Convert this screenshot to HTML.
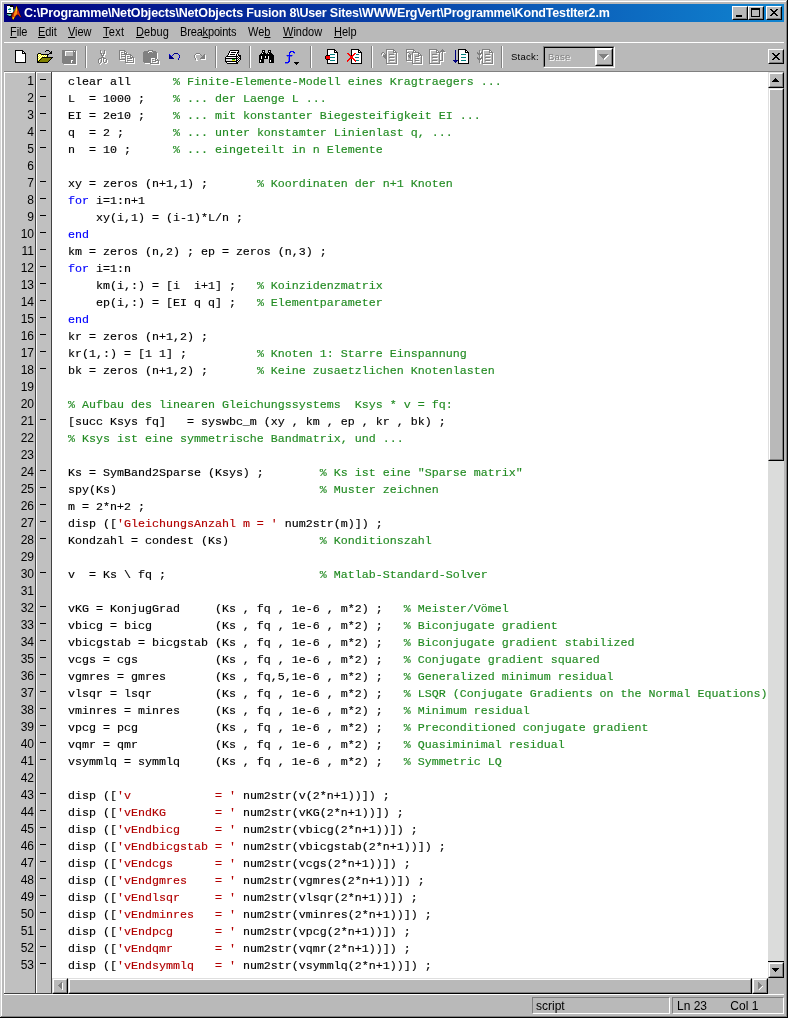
<!DOCTYPE html>
<html><head><meta charset="utf-8"><title>KondTestIter2.m</title>
<style>
html,body{margin:0;padding:0;}
body{width:788px;height:1019px;overflow:hidden;background:#b9b9b9;position:relative;font-family:"Liberation Sans",sans-serif;}
.abs{position:absolute;}
#frame div{position:absolute;}
#title{position:absolute;left:4px;top:4px;width:780px;height:18px;background:linear-gradient(to right,#000080 0%,#1084d0 100%);}
#ttext{position:absolute;left:20px;top:2px;height:14px;line-height:14px;font-size:12.5px;font-weight:bold;color:#fff;white-space:pre;letter-spacing:-0.18px;}
.cb{position:absolute;top:2px;width:16px;height:14px;box-sizing:border-box;background:#b9b9b9;border:1px solid;border-color:#fff #000 #000 #fff;}
.cb:after{content:"";position:absolute;left:0;top:0;right:0;bottom:0;border:1px solid;border-color:#b9b9b9 #808080 #808080 #b9b9b9;}
.mi{position:absolute;top:26px;font-size:12px;line-height:13px;color:#000;white-space:pre;transform:scaleX(0.917);transform-origin:0 0;}
.mi u{text-decoration:underline;text-underline-offset:1px;text-decoration-thickness:1px;}
#ed{position:absolute;left:4px;top:71px;width:780px;height:923px;}
.ln{position:absolute;left:68px;height:17px;line-height:17px;font-family:"Liberation Mono",monospace;font-size:11.667px;white-space:pre;color:#000;-webkit-text-stroke:0.15px;}
.k{color:#0000ff;} .c{color:#228b22;} .s{color:#b20000;}
.no{position:absolute;left:5px;width:29px;text-align:right;height:17px;line-height:17px;font-size:12px;color:#000;}
.da{position:absolute;left:40px;width:6px;height:1px;background:#000;}
.st{position:absolute;top:997px;height:17px;box-sizing:border-box;border:1px solid;border-color:#808080 #fff #fff #808080;font-size:12px;line-height:17px;color:#000;white-space:pre;}
</style></head><body><div id="all" style="position:absolute;left:0;top:0;width:788px;height:1019px;will-change:transform">
<!-- window frame -->
<div class="abs" style="left:0;top:0;width:788px;height:1018px;background:#000"></div>
<div class="abs" style="left:0;top:0;width:787px;height:1017px;background:#d4d4d4"></div>
<div class="abs" style="left:1px;top:1px;width:786px;height:1016px;background:#808080"></div>
<div class="abs" style="left:1px;top:1px;width:785px;height:1015px;background:#fff"></div>
<div class="abs" style="left:2px;top:2px;width:784px;height:1014px;background:#b9b9b9"></div>
<div class="abs" style="left:0;top:1018px;width:788px;height:1px;background:#fff"></div>
<!-- title bar -->
<div id="title">
<svg class="abs" style="left:2px;top:1px" width="17" height="16" viewBox="0 0 17 16">
<g shape-rendering="crispEdges">
<rect x="1" y="0" width="6" height="1" fill="#000"/><rect x="4" y="1" width="3" height="1" fill="#000"/><rect x="7" y="1" width="1" height="7" fill="#101010"/>
<rect x="1" y="1" width="3" height="1" fill="#fff"/><rect x="1" y="2" width="6" height="6" fill="#fff"/>
<rect x="1" y="8" width="7" height="1" fill="#000"/>
<rect x="3" y="3" width="2" height="1" fill="#50c8c0"/><rect x="2" y="4" width="3" height="1" fill="#008888"/><rect x="3" y="6" width="2" height="1" fill="#50c8c0"/>
</g>
<polygon points="0,9 6,9 7,7 9,5 8,10 5.5,12 3,11.5" fill="#000"/>
<polygon points="0.3,9 5.5,9 4.8,10.8 3.2,11 " fill="#62cfc4"/>
<polygon points="7.2,5 8.6,3.4 8.2,6.5 7,8.5" fill="#38b0b0"/>
<polygon points="10.5,0.3 11.8,2 13,5.5 14.3,9.5 16,13.2 13.6,11.6 12,10 11,10.6 9,12.8 7.6,15.2 6.3,14.6 5,10.8 6.4,8.6 8,6 9.3,3" fill="#200808"/>
<polygon points="10.3,1 11.2,3 12.2,6.5 13.5,10 15.2,12.6 13.4,11 12,9.4 10.6,10 8.8,12.2 7.4,14.6 6.6,14 5.6,10.8 7,8.6 8.4,6 9.5,3.2" fill="#c8300c"/>
<polygon points="9.4,5 10.2,3.4 10.9,6 11.3,9 10.2,9.4 8.6,11.6 7.8,11.8 8,9" fill="#ff9010"/>
<polygon points="11.2,2.6 12.6,6 14,10 15.4,12.8 13.4,11 12.2,9 11.5,6" fill="#d8301c"/>
<polygon points="9.6,2.4 8.6,4 8.2,6.4 9.2,4.6" fill="#30a0a0"/>
<polygon points="10.2,1.6 10.9,1.8 11.1,5.5 10.5,6.6 9.9,5" fill="#ffee00"/>
<polygon points="6.4,12.4 8.4,12 7.4,14.4 6.8,14.2" fill="#ffee00"/>
<polygon points="5.8,9.6 7.2,7.4 7.2,9.6 6.4,11.4" fill="#8c1408"/>
</svg>
<div id="ttext">C:\Programme\NetObjects\NetObjects Fusion 8\User Sites\WWWErgVert\Programme\KondTestIter2.m</div>
<div class="cb" style="left:728px"><svg class="abs" style="left:0;top:0" width="14" height="12" shape-rendering="crispEdges"><rect x="3" y="8" width="6" height="2" fill="#000"/></svg></div>
<div class="cb" style="left:744px"><svg class="abs" style="left:0;top:0" width="14" height="12" shape-rendering="crispEdges"><rect x="2" y="1" width="9" height="9" fill="#000"/><rect x="3" y="3" width="7" height="6" fill="#b9b9b9"/></svg></div>
<div class="cb" style="left:762px"><svg class="abs" style="left:0;top:0" width="14" height="12" shape-rendering="crispEdges"><rect x="3" y="2" width="2" height="1" fill="#000"/><rect x="9" y="2" width="2" height="1" fill="#000"/><rect x="4" y="3" width="2" height="1" fill="#000"/><rect x="8" y="3" width="2" height="1" fill="#000"/><rect x="5" y="4" width="4" height="1" fill="#000"/><rect x="6" y="5" width="2" height="1" fill="#000"/><rect x="5" y="6" width="4" height="1" fill="#000"/><rect x="4" y="7" width="2" height="1" fill="#000"/><rect x="8" y="7" width="2" height="1" fill="#000"/><rect x="3" y="8" width="2" height="1" fill="#000"/><rect x="9" y="8" width="2" height="1" fill="#000"/></svg></div>
</div>
<!-- menu -->
<span class="mi" style="left:10px;letter-spacing:-0.10px"><u>F</u>ile</span><span class="mi" style="left:38px;letter-spacing:-0.10px"><u>E</u>dit</span><span class="mi" style="left:68px;letter-spacing:-0.10px"><u>V</u>iew</span><span class="mi" style="left:103px;letter-spacing:0.30px"><u>T</u>ext</span><span class="mi" style="left:136px;letter-spacing:0.10px"><u>D</u>ebug</span><span class="mi" style="left:180px;letter-spacing:-0.18px">Brea<u>k</u>points</span><span class="mi" style="left:248px;letter-spacing:0.00px">We<u>b</u></span><span class="mi" style="left:283px;letter-spacing:0.00px"><u>W</u>indow</span><span class="mi" style="left:334px;letter-spacing:0.00px"><u>H</u>elp</span>
<div class="abs" style="left:4px;top:42px;width:780px;height:1px;background:#fff"></div>
<!-- toolbar -->
<svg class="abs" style="left:0;top:0" width="788" height="72" shape-rendering="crispEdges"><rect x="15" y="50" width="8" height="1" fill="#000"/><rect x="15" y="51" width="1" height="1" fill="#000"/><rect x="16" y="51" width="6" height="1" fill="#fff"/><rect x="22" y="51" width="2" height="1" fill="#000"/><rect x="15" y="52" width="1" height="1" fill="#000"/><rect x="16" y="52" width="6" height="1" fill="#fff"/><rect x="22" y="52" width="1" height="1" fill="#000"/><rect x="23" y="52" width="1" height="1" fill="#fff"/><rect x="24" y="52" width="1" height="1" fill="#000"/><rect x="15" y="53" width="1" height="1" fill="#000"/><rect x="16" y="53" width="6" height="1" fill="#fff"/><rect x="22" y="53" width="4" height="1" fill="#000"/><rect x="15" y="54" width="1" height="1" fill="#000"/><rect x="16" y="54" width="9" height="1" fill="#fff"/><rect x="25" y="54" width="1" height="1" fill="#000"/><rect x="15" y="55" width="1" height="1" fill="#000"/><rect x="16" y="55" width="9" height="1" fill="#fff"/><rect x="25" y="55" width="1" height="1" fill="#000"/><rect x="15" y="56" width="1" height="1" fill="#000"/><rect x="16" y="56" width="9" height="1" fill="#fff"/><rect x="25" y="56" width="1" height="1" fill="#000"/><rect x="15" y="57" width="1" height="1" fill="#000"/><rect x="16" y="57" width="9" height="1" fill="#fff"/><rect x="25" y="57" width="1" height="1" fill="#000"/><rect x="15" y="58" width="1" height="1" fill="#000"/><rect x="16" y="58" width="9" height="1" fill="#fff"/><rect x="25" y="58" width="1" height="1" fill="#000"/><rect x="15" y="59" width="1" height="1" fill="#000"/><rect x="16" y="59" width="9" height="1" fill="#fff"/><rect x="25" y="59" width="1" height="1" fill="#000"/><rect x="15" y="60" width="1" height="1" fill="#000"/><rect x="16" y="60" width="9" height="1" fill="#fff"/><rect x="25" y="60" width="1" height="1" fill="#000"/><rect x="15" y="61" width="1" height="1" fill="#000"/><rect x="16" y="61" width="9" height="1" fill="#fff"/><rect x="25" y="61" width="1" height="1" fill="#000"/><rect x="15" y="62" width="11" height="1" fill="#000"/><rect x="46" y="50" width="3" height="1" fill="#000"/><rect x="45" y="51" width="1" height="1" fill="#000"/><rect x="49" y="51" width="1" height="1" fill="#000"/><rect x="51" y="51" width="1" height="1" fill="#000"/><rect x="50" y="52" width="2" height="1" fill="#000"/><rect x="38" y="53" width="3" height="1" fill="#000"/><rect x="49" y="53" width="3" height="1" fill="#000"/><rect x="37" y="54" width="1" height="1" fill="#000"/><rect x="38" y="54" width="1" height="1" fill="#ffff00"/><rect x="39" y="54" width="1" height="1" fill="#fff"/><rect x="40" y="54" width="1" height="1" fill="#ffff00"/><rect x="41" y="54" width="8" height="1" fill="#000"/><rect x="37" y="55" width="1" height="1" fill="#000"/><rect x="38" y="55" width="1" height="1" fill="#fff"/><rect x="39" y="55" width="1" height="1" fill="#ffff00"/><rect x="40" y="55" width="1" height="1" fill="#fff"/><rect x="41" y="55" width="1" height="1" fill="#ffff00"/><rect x="42" y="55" width="1" height="1" fill="#fff"/><rect x="43" y="55" width="1" height="1" fill="#ffff00"/><rect x="44" y="55" width="1" height="1" fill="#fff"/><rect x="45" y="55" width="1" height="1" fill="#ffff00"/><rect x="46" y="55" width="1" height="1" fill="#fff"/><rect x="47" y="55" width="1" height="1" fill="#000"/><rect x="37" y="56" width="1" height="1" fill="#000"/><rect x="38" y="56" width="1" height="1" fill="#ffff00"/><rect x="39" y="56" width="1" height="1" fill="#fff"/><rect x="40" y="56" width="1" height="1" fill="#ffff00"/><rect x="41" y="56" width="1" height="1" fill="#fff"/><rect x="42" y="56" width="1" height="1" fill="#ffff00"/><rect x="43" y="56" width="1" height="1" fill="#fff"/><rect x="44" y="56" width="1" height="1" fill="#ffff00"/><rect x="45" y="56" width="1" height="1" fill="#fff"/><rect x="46" y="56" width="1" height="1" fill="#ffff00"/><rect x="47" y="56" width="1" height="1" fill="#000"/><rect x="37" y="57" width="1" height="1" fill="#000"/><rect x="38" y="57" width="1" height="1" fill="#fff"/><rect x="39" y="57" width="1" height="1" fill="#ffff00"/><rect x="40" y="57" width="1" height="1" fill="#fff"/><rect x="41" y="57" width="1" height="1" fill="#ffff00"/><rect x="42" y="57" width="11" height="1" fill="#000"/><rect x="37" y="58" width="1" height="1" fill="#000"/><rect x="38" y="58" width="1" height="1" fill="#ffff00"/><rect x="39" y="58" width="1" height="1" fill="#fff"/><rect x="40" y="58" width="1" height="1" fill="#ffff00"/><rect x="41" y="58" width="1" height="1" fill="#000"/><rect x="42" y="58" width="9" height="1" fill="#808000"/><rect x="51" y="58" width="1" height="1" fill="#000"/><rect x="37" y="59" width="1" height="1" fill="#000"/><rect x="38" y="59" width="1" height="1" fill="#fff"/><rect x="39" y="59" width="1" height="1" fill="#ffff00"/><rect x="40" y="59" width="1" height="1" fill="#000"/><rect x="41" y="59" width="9" height="1" fill="#808000"/><rect x="50" y="59" width="1" height="1" fill="#000"/><rect x="37" y="60" width="1" height="1" fill="#000"/><rect x="38" y="60" width="1" height="1" fill="#ffff00"/><rect x="39" y="60" width="1" height="1" fill="#000"/><rect x="40" y="60" width="9" height="1" fill="#808000"/><rect x="49" y="60" width="1" height="1" fill="#000"/><rect x="37" y="61" width="2" height="1" fill="#000"/><rect x="39" y="61" width="9" height="1" fill="#808000"/><rect x="48" y="61" width="1" height="1" fill="#000"/><rect x="37" y="62" width="11" height="1" fill="#000"/><rect x="62" y="50" width="14" height="1" fill="#808080"/><rect x="62" y="51" width="3" height="1" fill="#808080"/><rect x="65" y="51" width="8" height="1" fill="#fff"/><rect x="73" y="51" width="1" height="1" fill="#808080"/><rect x="74" y="51" width="1" height="1" fill="#fff"/><rect x="75" y="51" width="1" height="1" fill="#808080"/><rect x="76" y="51" width="1" height="1" fill="#fff"/><rect x="62" y="52" width="3" height="1" fill="#808080"/><rect x="65" y="52" width="1" height="1" fill="#fff"/><rect x="66" y="52" width="7" height="1" fill="#b9b9b9"/><rect x="73" y="52" width="3" height="1" fill="#808080"/><rect x="76" y="52" width="1" height="1" fill="#fff"/><rect x="62" y="53" width="3" height="1" fill="#808080"/><rect x="65" y="53" width="1" height="1" fill="#fff"/><rect x="66" y="53" width="7" height="1" fill="#b9b9b9"/><rect x="73" y="53" width="3" height="1" fill="#808080"/><rect x="76" y="53" width="1" height="1" fill="#fff"/><rect x="62" y="54" width="3" height="1" fill="#808080"/><rect x="65" y="54" width="1" height="1" fill="#fff"/><rect x="66" y="54" width="7" height="1" fill="#b9b9b9"/><rect x="73" y="54" width="3" height="1" fill="#808080"/><rect x="76" y="54" width="1" height="1" fill="#fff"/><rect x="62" y="55" width="3" height="1" fill="#808080"/><rect x="65" y="55" width="1" height="1" fill="#fff"/><rect x="66" y="55" width="7" height="1" fill="#b9b9b9"/><rect x="73" y="55" width="3" height="1" fill="#808080"/><rect x="76" y="55" width="1" height="1" fill="#fff"/><rect x="62" y="56" width="14" height="1" fill="#808080"/><rect x="76" y="56" width="1" height="1" fill="#fff"/><rect x="62" y="57" width="14" height="1" fill="#808080"/><rect x="76" y="57" width="1" height="1" fill="#fff"/><rect x="62" y="58" width="14" height="1" fill="#808080"/><rect x="76" y="58" width="1" height="1" fill="#fff"/><rect x="62" y="59" width="14" height="1" fill="#808080"/><rect x="76" y="59" width="1" height="1" fill="#fff"/><rect x="62" y="60" width="9" height="1" fill="#808080"/><rect x="71" y="60" width="2" height="1" fill="#fff"/><rect x="73" y="60" width="3" height="1" fill="#808080"/><rect x="76" y="60" width="1" height="1" fill="#fff"/><rect x="62" y="61" width="9" height="1" fill="#808080"/><rect x="71" y="61" width="1" height="1" fill="#fff"/><rect x="72" y="61" width="4" height="1" fill="#808080"/><rect x="76" y="61" width="1" height="1" fill="#fff"/><rect x="62" y="62" width="9" height="1" fill="#808080"/><rect x="71" y="62" width="1" height="1" fill="#fff"/><rect x="72" y="62" width="4" height="1" fill="#808080"/><rect x="76" y="62" width="1" height="1" fill="#fff"/><rect x="63" y="63" width="13" height="1" fill="#808080"/><rect x="76" y="63" width="1" height="1" fill="#fff"/><rect x="64" y="64" width="13" height="1" fill="#fff"/><rect x="100" y="50" width="1" height="1" fill="#808080"/><rect x="104" y="50" width="1" height="1" fill="#808080"/><rect x="100" y="51" width="1" height="1" fill="#808080"/><rect x="101" y="51" width="1" height="1" fill="#fff"/><rect x="104" y="51" width="1" height="1" fill="#808080"/><rect x="105" y="51" width="1" height="1" fill="#fff"/><rect x="100" y="52" width="1" height="1" fill="#808080"/><rect x="101" y="52" width="1" height="1" fill="#fff"/><rect x="104" y="52" width="1" height="1" fill="#808080"/><rect x="105" y="52" width="1" height="1" fill="#fff"/><rect x="100" y="53" width="2" height="1" fill="#808080"/><rect x="103" y="53" width="2" height="1" fill="#808080"/><rect x="105" y="53" width="1" height="1" fill="#fff"/><rect x="101" y="54" width="1" height="1" fill="#808080"/><rect x="102" y="54" width="1" height="1" fill="#fff"/><rect x="103" y="54" width="1" height="1" fill="#808080"/><rect x="104" y="54" width="2" height="1" fill="#fff"/><rect x="101" y="55" width="3" height="1" fill="#808080"/><rect x="104" y="55" width="1" height="1" fill="#fff"/><rect x="102" y="56" width="1" height="1" fill="#808080"/><rect x="103" y="56" width="2" height="1" fill="#fff"/><rect x="101" y="57" width="3" height="1" fill="#808080"/><rect x="99" y="58" width="3" height="1" fill="#808080"/><rect x="102" y="58" width="1" height="1" fill="#fff"/><rect x="103" y="58" width="3" height="1" fill="#808080"/><rect x="98" y="59" width="1" height="1" fill="#808080"/><rect x="100" y="59" width="1" height="1" fill="#fff"/><rect x="101" y="59" width="1" height="1" fill="#808080"/><rect x="102" y="59" width="1" height="1" fill="#fff"/><rect x="103" y="59" width="1" height="1" fill="#808080"/><rect x="104" y="59" width="2" height="1" fill="#fff"/><rect x="106" y="59" width="1" height="1" fill="#808080"/><rect x="98" y="60" width="1" height="1" fill="#808080"/><rect x="99" y="60" width="1" height="1" fill="#fff"/><rect x="101" y="60" width="1" height="1" fill="#808080"/><rect x="102" y="60" width="1" height="1" fill="#fff"/><rect x="103" y="60" width="1" height="1" fill="#808080"/><rect x="104" y="60" width="1" height="1" fill="#fff"/><rect x="106" y="60" width="1" height="1" fill="#808080"/><rect x="107" y="60" width="1" height="1" fill="#fff"/><rect x="98" y="61" width="1" height="1" fill="#808080"/><rect x="99" y="61" width="1" height="1" fill="#fff"/><rect x="101" y="61" width="1" height="1" fill="#808080"/><rect x="102" y="61" width="1" height="1" fill="#fff"/><rect x="103" y="61" width="1" height="1" fill="#808080"/><rect x="104" y="61" width="1" height="1" fill="#fff"/><rect x="106" y="61" width="1" height="1" fill="#808080"/><rect x="107" y="61" width="1" height="1" fill="#fff"/><rect x="98" y="62" width="1" height="1" fill="#808080"/><rect x="99" y="62" width="1" height="1" fill="#fff"/><rect x="100" y="62" width="1" height="1" fill="#808080"/><rect x="102" y="62" width="1" height="1" fill="#fff"/><rect x="104" y="62" width="2" height="1" fill="#808080"/><rect x="107" y="62" width="1" height="1" fill="#fff"/><rect x="99" y="63" width="1" height="1" fill="#808080"/><rect x="101" y="63" width="1" height="1" fill="#fff"/><rect x="105" y="63" width="2" height="1" fill="#fff"/><rect x="100" y="64" width="1" height="1" fill="#fff"/><rect x="119" y="50" width="6" height="1" fill="#808080"/><rect x="119" y="51" width="1" height="1" fill="#808080"/><rect x="120" y="51" width="4" height="1" fill="#fff"/><rect x="124" y="51" width="2" height="1" fill="#808080"/><rect x="119" y="52" width="1" height="1" fill="#808080"/><rect x="120" y="52" width="1" height="1" fill="#fff"/><rect x="121" y="52" width="2" height="1" fill="#808080"/><rect x="124" y="52" width="1" height="1" fill="#808080"/><rect x="125" y="52" width="1" height="1" fill="#fff"/><rect x="126" y="52" width="1" height="1" fill="#808080"/><rect x="119" y="53" width="1" height="1" fill="#808080"/><rect x="120" y="53" width="1" height="1" fill="#fff"/><rect x="122" y="53" width="2" height="1" fill="#fff"/><rect x="124" y="53" width="3" height="1" fill="#808080"/><rect x="127" y="53" width="1" height="1" fill="#fff"/><rect x="119" y="54" width="1" height="1" fill="#808080"/><rect x="120" y="54" width="1" height="1" fill="#fff"/><rect x="121" y="54" width="10" height="1" fill="#808080"/><rect x="119" y="55" width="1" height="1" fill="#808080"/><rect x="120" y="55" width="1" height="1" fill="#fff"/><rect x="122" y="55" width="3" height="1" fill="#fff"/><rect x="125" y="55" width="1" height="1" fill="#808080"/><rect x="126" y="55" width="4" height="1" fill="#fff"/><rect x="130" y="55" width="2" height="1" fill="#808080"/><rect x="119" y="56" width="1" height="1" fill="#808080"/><rect x="120" y="56" width="1" height="1" fill="#fff"/><rect x="121" y="56" width="5" height="1" fill="#808080"/><rect x="126" y="56" width="1" height="1" fill="#fff"/><rect x="127" y="56" width="2" height="1" fill="#808080"/><rect x="130" y="56" width="1" height="1" fill="#808080"/><rect x="131" y="56" width="1" height="1" fill="#fff"/><rect x="132" y="56" width="1" height="1" fill="#808080"/><rect x="119" y="57" width="1" height="1" fill="#808080"/><rect x="120" y="57" width="1" height="1" fill="#fff"/><rect x="122" y="57" width="3" height="1" fill="#fff"/><rect x="125" y="57" width="1" height="1" fill="#808080"/><rect x="126" y="57" width="1" height="1" fill="#fff"/><rect x="128" y="57" width="2" height="1" fill="#fff"/><rect x="130" y="57" width="4" height="1" fill="#808080"/><rect x="119" y="58" width="1" height="1" fill="#808080"/><rect x="120" y="58" width="1" height="1" fill="#fff"/><rect x="125" y="58" width="1" height="1" fill="#808080"/><rect x="126" y="58" width="1" height="1" fill="#fff"/><rect x="127" y="58" width="5" height="1" fill="#808080"/><rect x="132" y="58" width="1" height="1" fill="#fff"/><rect x="133" y="58" width="1" height="1" fill="#808080"/><rect x="134" y="58" width="1" height="1" fill="#fff"/><rect x="119" y="59" width="7" height="1" fill="#808080"/><rect x="126" y="59" width="1" height="1" fill="#fff"/><rect x="128" y="59" width="5" height="1" fill="#fff"/><rect x="133" y="59" width="1" height="1" fill="#808080"/><rect x="134" y="59" width="1" height="1" fill="#fff"/><rect x="120" y="60" width="5" height="1" fill="#fff"/><rect x="125" y="60" width="1" height="1" fill="#808080"/><rect x="126" y="60" width="1" height="1" fill="#fff"/><rect x="127" y="60" width="5" height="1" fill="#808080"/><rect x="133" y="60" width="1" height="1" fill="#808080"/><rect x="134" y="60" width="1" height="1" fill="#fff"/><rect x="125" y="61" width="1" height="1" fill="#808080"/><rect x="126" y="61" width="1" height="1" fill="#fff"/><rect x="128" y="61" width="5" height="1" fill="#fff"/><rect x="133" y="61" width="1" height="1" fill="#808080"/><rect x="134" y="61" width="1" height="1" fill="#fff"/><rect x="125" y="62" width="9" height="1" fill="#808080"/><rect x="134" y="62" width="1" height="1" fill="#fff"/><rect x="126" y="63" width="9" height="1" fill="#fff"/><rect x="148" y="50" width="5" height="1" fill="#808080"/><rect x="144" y="51" width="5" height="1" fill="#808080"/><rect x="149" y="51" width="3" height="1" fill="#fff"/><rect x="152" y="51" width="4" height="1" fill="#808080"/><rect x="143" y="52" width="5" height="1" fill="#808080"/><rect x="148" y="52" width="1" height="1" fill="#fff"/><rect x="149" y="52" width="3" height="1" fill="#808080"/><rect x="153" y="52" width="4" height="1" fill="#808080"/><rect x="143" y="53" width="14" height="1" fill="#808080"/><rect x="157" y="53" width="1" height="1" fill="#fff"/><rect x="143" y="54" width="14" height="1" fill="#808080"/><rect x="157" y="54" width="1" height="1" fill="#fff"/><rect x="143" y="55" width="14" height="1" fill="#808080"/><rect x="157" y="55" width="1" height="1" fill="#fff"/><rect x="143" y="56" width="14" height="1" fill="#808080"/><rect x="157" y="56" width="1" height="1" fill="#fff"/><rect x="143" y="57" width="14" height="1" fill="#808080"/><rect x="157" y="57" width="1" height="1" fill="#fff"/><rect x="143" y="58" width="8" height="1" fill="#808080"/><rect x="151" y="58" width="4" height="1" fill="#fff"/><rect x="155" y="58" width="2" height="1" fill="#808080"/><rect x="157" y="58" width="1" height="1" fill="#fff"/><rect x="143" y="59" width="8" height="1" fill="#808080"/><rect x="151" y="59" width="1" height="1" fill="#fff"/><rect x="152" y="59" width="2" height="1" fill="#808080"/><rect x="155" y="59" width="1" height="1" fill="#808080"/><rect x="156" y="59" width="1" height="1" fill="#fff"/><rect x="157" y="59" width="1" height="1" fill="#808080"/><rect x="143" y="60" width="8" height="1" fill="#808080"/><rect x="151" y="60" width="1" height="1" fill="#fff"/><rect x="153" y="60" width="2" height="1" fill="#fff"/><rect x="155" y="60" width="4" height="1" fill="#808080"/><rect x="143" y="61" width="8" height="1" fill="#808080"/><rect x="151" y="61" width="1" height="1" fill="#fff"/><rect x="152" y="61" width="4" height="1" fill="#808080"/><rect x="156" y="61" width="2" height="1" fill="#fff"/><rect x="158" y="61" width="1" height="1" fill="#808080"/><rect x="159" y="61" width="1" height="1" fill="#fff"/><rect x="144" y="62" width="7" height="1" fill="#808080"/><rect x="151" y="62" width="1" height="1" fill="#fff"/><rect x="153" y="62" width="4" height="1" fill="#fff"/><rect x="158" y="62" width="1" height="1" fill="#808080"/><rect x="159" y="62" width="1" height="1" fill="#fff"/><rect x="145" y="63" width="5" height="1" fill="#fff"/><rect x="150" y="63" width="9" height="1" fill="#808080"/><rect x="159" y="63" width="1" height="1" fill="#fff"/><rect x="151" y="64" width="9" height="1" fill="#fff"/><rect x="174" y="53" width="4" height="1" fill="#000080"/><rect x="169" y="54" width="1" height="1" fill="#0000ff"/><rect x="173" y="54" width="1" height="1" fill="#000080"/><rect x="178" y="54" width="1" height="1" fill="#0000ff"/><rect x="169" y="55" width="1" height="1" fill="#000080"/><rect x="170" y="55" width="1" height="1" fill="#0000ff"/><rect x="172" y="55" width="1" height="1" fill="#0000ff"/><rect x="179" y="55" width="1" height="1" fill="#000080"/><rect x="169" y="56" width="3" height="1" fill="#000080"/><rect x="179" y="56" width="1" height="1" fill="#0000ff"/><rect x="169" y="57" width="4" height="1" fill="#000080"/><rect x="179" y="57" width="1" height="1" fill="#000080"/><rect x="169" y="58" width="5" height="1" fill="#000080"/><rect x="178" y="58" width="1" height="1" fill="#0000ff"/><rect x="178" y="59" width="1" height="1" fill="#000080"/><rect x="196" y="53" width="4" height="1" fill="#808080"/><rect x="195" y="54" width="1" height="1" fill="#808080"/><rect x="196" y="54" width="4" height="1" fill="#fff"/><rect x="200" y="54" width="1" height="1" fill="#808080"/><rect x="204" y="54" width="1" height="1" fill="#808080"/><rect x="194" y="55" width="1" height="1" fill="#808080"/><rect x="195" y="55" width="1" height="1" fill="#fff"/><rect x="201" y="55" width="1" height="1" fill="#808080"/><rect x="203" y="55" width="2" height="1" fill="#808080"/><rect x="205" y="55" width="1" height="1" fill="#fff"/><rect x="194" y="56" width="1" height="1" fill="#808080"/><rect x="195" y="56" width="1" height="1" fill="#fff"/><rect x="202" y="56" width="3" height="1" fill="#808080"/><rect x="205" y="56" width="1" height="1" fill="#fff"/><rect x="194" y="57" width="1" height="1" fill="#808080"/><rect x="195" y="57" width="1" height="1" fill="#fff"/><rect x="201" y="57" width="4" height="1" fill="#808080"/><rect x="205" y="57" width="1" height="1" fill="#fff"/><rect x="195" y="58" width="1" height="1" fill="#808080"/><rect x="196" y="58" width="1" height="1" fill="#fff"/><rect x="200" y="58" width="5" height="1" fill="#808080"/><rect x="205" y="58" width="1" height="1" fill="#fff"/><rect x="195" y="59" width="1" height="1" fill="#808080"/><rect x="196" y="59" width="1" height="1" fill="#fff"/><rect x="201" y="59" width="5" height="1" fill="#fff"/><rect x="196" y="60" width="2" height="1" fill="#fff"/><rect x="230" y="50" width="9" height="1" fill="#000"/><rect x="229" y="51" width="1" height="1" fill="#000"/><rect x="230" y="51" width="8" height="1" fill="#fff"/><rect x="238" y="51" width="1" height="1" fill="#000"/><rect x="229" y="52" width="1" height="1" fill="#000"/><rect x="230" y="52" width="1" height="1" fill="#fff"/><rect x="231" y="52" width="5" height="1" fill="#000"/><rect x="236" y="52" width="1" height="1" fill="#fff"/><rect x="237" y="52" width="2" height="1" fill="#000"/><rect x="228" y="53" width="1" height="1" fill="#000"/><rect x="229" y="53" width="8" height="1" fill="#fff"/><rect x="237" y="53" width="1" height="1" fill="#000"/><rect x="228" y="54" width="1" height="1" fill="#000"/><rect x="229" y="54" width="1" height="1" fill="#fff"/><rect x="230" y="54" width="5" height="1" fill="#000"/><rect x="235" y="54" width="1" height="1" fill="#fff"/><rect x="236" y="54" width="1" height="1" fill="#000"/><rect x="237" y="54" width="1" height="1" fill="#fff"/><rect x="238" y="54" width="1" height="1" fill="#000"/><rect x="227" y="55" width="1" height="1" fill="#000"/><rect x="228" y="55" width="8" height="1" fill="#fff"/><rect x="236" y="55" width="1" height="1" fill="#000"/><rect x="237" y="55" width="1" height="1" fill="#fff"/><rect x="238" y="55" width="3" height="1" fill="#000"/><rect x="226" y="56" width="12" height="1" fill="#000"/><rect x="238" y="56" width="1" height="1" fill="#fff"/><rect x="239" y="56" width="2" height="1" fill="#000"/><rect x="225" y="57" width="1" height="1" fill="#000"/><rect x="226" y="57" width="10" height="1" fill="#fff"/><rect x="236" y="57" width="1" height="1" fill="#000"/><rect x="237" y="57" width="1" height="1" fill="#fff"/><rect x="238" y="57" width="1" height="1" fill="#000"/><rect x="239" y="57" width="1" height="1" fill="#fff"/><rect x="240" y="57" width="1" height="1" fill="#000"/><rect x="225" y="58" width="13" height="1" fill="#000"/><rect x="238" y="58" width="1" height="1" fill="#fff"/><rect x="239" y="58" width="2" height="1" fill="#000"/><rect x="225" y="59" width="1" height="1" fill="#000"/><rect x="226" y="59" width="6" height="1" fill="#e0e0e0"/><rect x="232" y="59" width="3" height="1" fill="#00a000"/><rect x="235" y="59" width="1" height="1" fill="#e0e0e0"/><rect x="236" y="59" width="1" height="1" fill="#000"/><rect x="237" y="59" width="1" height="1" fill="#fff"/><rect x="238" y="59" width="1" height="1" fill="#000"/><rect x="239" y="59" width="1" height="1" fill="#fff"/><rect x="240" y="59" width="1" height="1" fill="#000"/><rect x="225" y="60" width="1" height="1" fill="#000"/><rect x="226" y="60" width="6" height="1" fill="#e0e0e0"/><rect x="232" y="60" width="3" height="1" fill="#e8e800"/><rect x="235" y="60" width="1" height="1" fill="#e0e0e0"/><rect x="236" y="60" width="2" height="1" fill="#000"/><rect x="238" y="60" width="1" height="1" fill="#fff"/><rect x="239" y="60" width="1" height="1" fill="#000"/><rect x="225" y="61" width="12" height="1" fill="#000"/><rect x="237" y="61" width="1" height="1" fill="#fff"/><rect x="238" y="61" width="1" height="1" fill="#000"/><rect x="226" y="62" width="1" height="1" fill="#000"/><rect x="227" y="62" width="9" height="1" fill="#fff"/><rect x="236" y="62" width="2" height="1" fill="#000"/><rect x="227" y="63" width="11" height="1" fill="#000"/><rect x="262" y="50" width="3" height="1" fill="#000"/><rect x="268" y="50" width="3" height="1" fill="#000"/><rect x="262" y="51" width="1" height="1" fill="#000"/><rect x="263" y="51" width="1" height="1" fill="#fff"/><rect x="264" y="51" width="1" height="1" fill="#000"/><rect x="268" y="51" width="1" height="1" fill="#000"/><rect x="269" y="51" width="1" height="1" fill="#fff"/><rect x="270" y="51" width="1" height="1" fill="#000"/><rect x="262" y="52" width="3" height="1" fill="#000"/><rect x="268" y="52" width="3" height="1" fill="#000"/><rect x="261" y="53" width="1" height="1" fill="#000"/><rect x="262" y="53" width="1" height="1" fill="#fff"/><rect x="263" y="53" width="3" height="1" fill="#000"/><rect x="267" y="53" width="1" height="1" fill="#000"/><rect x="268" y="53" width="1" height="1" fill="#fff"/><rect x="269" y="53" width="3" height="1" fill="#000"/><rect x="260" y="54" width="13" height="1" fill="#000"/><rect x="259" y="55" width="15" height="1" fill="#000"/><rect x="259" y="56" width="2" height="1" fill="#000"/><rect x="261" y="56" width="1" height="1" fill="#fff"/><rect x="262" y="56" width="3" height="1" fill="#000"/><rect x="265" y="56" width="1" height="1" fill="#fff"/><rect x="266" y="56" width="2" height="1" fill="#000"/><rect x="268" y="56" width="1" height="1" fill="#fff"/><rect x="269" y="56" width="5" height="1" fill="#000"/><rect x="259" y="57" width="2" height="1" fill="#000"/><rect x="261" y="57" width="1" height="1" fill="#fff"/><rect x="262" y="57" width="3" height="1" fill="#000"/><rect x="265" y="57" width="1" height="1" fill="#fff"/><rect x="266" y="57" width="2" height="1" fill="#000"/><rect x="268" y="57" width="1" height="1" fill="#fff"/><rect x="269" y="57" width="5" height="1" fill="#000"/><rect x="259" y="58" width="2" height="1" fill="#000"/><rect x="261" y="58" width="1" height="1" fill="#fff"/><rect x="262" y="58" width="6" height="1" fill="#000"/><rect x="268" y="58" width="1" height="1" fill="#fff"/><rect x="269" y="58" width="5" height="1" fill="#000"/><rect x="259" y="59" width="5" height="1" fill="#000"/><rect x="269" y="59" width="5" height="1" fill="#000"/><rect x="259" y="60" width="1" height="1" fill="#000"/><rect x="260" y="60" width="1" height="1" fill="#fff"/><rect x="261" y="60" width="3" height="1" fill="#000"/><rect x="269" y="60" width="1" height="1" fill="#000"/><rect x="270" y="60" width="1" height="1" fill="#fff"/><rect x="271" y="60" width="3" height="1" fill="#000"/><rect x="259" y="61" width="1" height="1" fill="#000"/><rect x="260" y="61" width="1" height="1" fill="#fff"/><rect x="261" y="61" width="3" height="1" fill="#000"/><rect x="269" y="61" width="1" height="1" fill="#000"/><rect x="270" y="61" width="1" height="1" fill="#fff"/><rect x="271" y="61" width="3" height="1" fill="#000"/><rect x="259" y="62" width="5" height="1" fill="#000"/><rect x="269" y="62" width="5" height="1" fill="#000"/><rect x="290" y="51" width="4" height="1" fill="#0000ff"/><rect x="289" y="52" width="2" height="1" fill="#0000ff"/><rect x="293" y="52" width="2" height="1" fill="#0000ff"/><rect x="289" y="53" width="1" height="1" fill="#0000ff"/><rect x="294" y="53" width="1" height="1" fill="#6c6cd6"/><rect x="289" y="54" width="1" height="1" fill="#0000ff"/><rect x="286" y="55" width="1" height="1" fill="#6c6cd6"/><rect x="287" y="55" width="5" height="1" fill="#0000ff"/><rect x="292" y="55" width="1" height="1" fill="#6c6cd6"/><rect x="287" y="56" width="2" height="1" fill="#6c6cd6"/><rect x="289" y="56" width="1" height="1" fill="#0000ff"/><rect x="290" y="56" width="2" height="1" fill="#6c6cd6"/><rect x="288" y="57" width="1" height="1" fill="#6c6cd6"/><rect x="289" y="57" width="1" height="1" fill="#0000ff"/><rect x="288" y="58" width="1" height="1" fill="#6c6cd6"/><rect x="289" y="58" width="1" height="1" fill="#0000ff"/><rect x="288" y="59" width="1" height="1" fill="#6c6cd6"/><rect x="289" y="59" width="1" height="1" fill="#0000ff"/><rect x="288" y="60" width="1" height="1" fill="#6c6cd6"/><rect x="289" y="60" width="1" height="1" fill="#0000ff"/><rect x="288" y="61" width="2" height="1" fill="#0000ff"/><rect x="285" y="62" width="4" height="1" fill="#0000ff"/><rect x="294" y="62" width="5" height="1" fill="#000"/><rect x="285" y="63" width="3" height="1" fill="#6c6cd6"/><rect x="295" y="63" width="3" height="1" fill="#000"/><rect x="296" y="64" width="1" height="1" fill="#000"/><rect x="327" y="49" width="8" height="1" fill="#000"/><rect x="327" y="50" width="1" height="1" fill="#000"/><rect x="328" y="50" width="6" height="1" fill="#fff"/><rect x="334" y="50" width="2" height="1" fill="#000"/><rect x="327" y="51" width="1" height="1" fill="#000"/><rect x="328" y="51" width="6" height="1" fill="#fff"/><rect x="334" y="51" width="1" height="1" fill="#000"/><rect x="335" y="51" width="1" height="1" fill="#fff"/><rect x="336" y="51" width="1" height="1" fill="#000"/><rect x="327" y="52" width="1" height="1" fill="#000"/><rect x="328" y="52" width="6" height="1" fill="#fff"/><rect x="334" y="52" width="4" height="1" fill="#000"/><rect x="327" y="53" width="1" height="1" fill="#000"/><rect x="328" y="53" width="9" height="1" fill="#fff"/><rect x="337" y="53" width="1" height="1" fill="#000"/><rect x="327" y="54" width="1" height="1" fill="#000"/><rect x="328" y="54" width="2" height="1" fill="#fff"/><rect x="330" y="54" width="5" height="1" fill="#008080"/><rect x="335" y="54" width="2" height="1" fill="#fff"/><rect x="337" y="54" width="1" height="1" fill="#000"/><rect x="327" y="55" width="1" height="1" fill="#000"/><rect x="328" y="55" width="9" height="1" fill="#fff"/><rect x="337" y="55" width="1" height="1" fill="#000"/><rect x="327" y="56" width="1" height="1" fill="#000"/><rect x="328" y="56" width="9" height="1" fill="#fff"/><rect x="337" y="56" width="1" height="1" fill="#000"/><rect x="327" y="57" width="1" height="1" fill="#000"/><rect x="328" y="57" width="2" height="1" fill="#fff"/><rect x="330" y="57" width="5" height="1" fill="#008080"/><rect x="335" y="57" width="2" height="1" fill="#fff"/><rect x="337" y="57" width="1" height="1" fill="#000"/><rect x="327" y="58" width="1" height="1" fill="#000"/><rect x="328" y="58" width="9" height="1" fill="#fff"/><rect x="337" y="58" width="1" height="1" fill="#000"/><rect x="327" y="59" width="1" height="1" fill="#000"/><rect x="328" y="59" width="9" height="1" fill="#fff"/><rect x="337" y="59" width="1" height="1" fill="#000"/><rect x="327" y="60" width="1" height="1" fill="#000"/><rect x="328" y="60" width="2" height="1" fill="#fff"/><rect x="330" y="60" width="5" height="1" fill="#008080"/><rect x="335" y="60" width="2" height="1" fill="#fff"/><rect x="337" y="60" width="1" height="1" fill="#000"/><rect x="327" y="61" width="1" height="1" fill="#000"/><rect x="328" y="61" width="9" height="1" fill="#fff"/><rect x="337" y="61" width="1" height="1" fill="#000"/><rect x="327" y="62" width="1" height="1" fill="#000"/><rect x="328" y="62" width="9" height="1" fill="#fff"/><rect x="337" y="62" width="1" height="1" fill="#000"/><rect x="327" y="63" width="11" height="1" fill="#000"/><rect x="326" y="55" width="4" height="1" fill="#000"/><rect x="325" y="56" width="1" height="1" fill="#000"/><rect x="326" y="56" width="4" height="1" fill="#ff0000"/><rect x="325" y="57" width="1" height="1" fill="#000"/><rect x="326" y="57" width="4" height="1" fill="#ff0000"/><rect x="325" y="58" width="1" height="1" fill="#000"/><rect x="326" y="58" width="4" height="1" fill="#ff0000"/><rect x="326" y="59" width="4" height="1" fill="#000"/><rect x="351" y="49" width="8" height="1" fill="#000"/><rect x="351" y="50" width="1" height="1" fill="#000"/><rect x="352" y="50" width="6" height="1" fill="#fff"/><rect x="358" y="50" width="2" height="1" fill="#000"/><rect x="351" y="51" width="1" height="1" fill="#000"/><rect x="352" y="51" width="6" height="1" fill="#fff"/><rect x="358" y="51" width="1" height="1" fill="#000"/><rect x="359" y="51" width="1" height="1" fill="#fff"/><rect x="360" y="51" width="1" height="1" fill="#000"/><rect x="351" y="52" width="1" height="1" fill="#000"/><rect x="352" y="52" width="6" height="1" fill="#fff"/><rect x="358" y="52" width="4" height="1" fill="#000"/><rect x="351" y="53" width="1" height="1" fill="#000"/><rect x="352" y="53" width="9" height="1" fill="#fff"/><rect x="361" y="53" width="1" height="1" fill="#000"/><rect x="351" y="54" width="1" height="1" fill="#000"/><rect x="352" y="54" width="4" height="1" fill="#fff"/><rect x="356" y="54" width="3" height="1" fill="#008080"/><rect x="359" y="54" width="2" height="1" fill="#fff"/><rect x="361" y="54" width="1" height="1" fill="#000"/><rect x="351" y="55" width="1" height="1" fill="#000"/><rect x="352" y="55" width="9" height="1" fill="#fff"/><rect x="361" y="55" width="1" height="1" fill="#000"/><rect x="351" y="56" width="1" height="1" fill="#000"/><rect x="352" y="56" width="9" height="1" fill="#fff"/><rect x="361" y="56" width="1" height="1" fill="#000"/><rect x="351" y="57" width="1" height="1" fill="#000"/><rect x="352" y="57" width="3" height="1" fill="#fff"/><rect x="355" y="57" width="4" height="1" fill="#008080"/><rect x="359" y="57" width="2" height="1" fill="#fff"/><rect x="361" y="57" width="1" height="1" fill="#000"/><rect x="351" y="58" width="1" height="1" fill="#000"/><rect x="352" y="58" width="9" height="1" fill="#fff"/><rect x="361" y="58" width="1" height="1" fill="#000"/><rect x="351" y="59" width="1" height="1" fill="#000"/><rect x="352" y="59" width="9" height="1" fill="#fff"/><rect x="361" y="59" width="1" height="1" fill="#000"/><rect x="351" y="60" width="1" height="1" fill="#000"/><rect x="352" y="60" width="4" height="1" fill="#fff"/><rect x="356" y="60" width="3" height="1" fill="#008080"/><rect x="359" y="60" width="2" height="1" fill="#fff"/><rect x="361" y="60" width="1" height="1" fill="#000"/><rect x="351" y="61" width="1" height="1" fill="#000"/><rect x="352" y="61" width="9" height="1" fill="#fff"/><rect x="361" y="61" width="1" height="1" fill="#000"/><rect x="351" y="62" width="1" height="1" fill="#000"/><rect x="352" y="62" width="9" height="1" fill="#fff"/><rect x="361" y="62" width="1" height="1" fill="#000"/><rect x="351" y="63" width="11" height="1" fill="#000"/><rect x="347" y="53" width="2" height="1" fill="#ff0000"/><rect x="354" y="53" width="2" height="1" fill="#ff0000"/><rect x="348" y="54" width="2" height="1" fill="#ff0000"/><rect x="353" y="54" width="2" height="1" fill="#ff0000"/><rect x="349" y="55" width="2" height="1" fill="#ff0000"/><rect x="352" y="55" width="2" height="1" fill="#ff0000"/><rect x="350" y="56" width="3" height="1" fill="#ff0000"/><rect x="350" y="57" width="3" height="1" fill="#ff0000"/><rect x="349" y="58" width="5" height="1" fill="#ff0000"/><rect x="348" y="59" width="2" height="1" fill="#ff0000"/><rect x="353" y="59" width="2" height="1" fill="#ff0000"/><rect x="347" y="60" width="2" height="1" fill="#ff0000"/><rect x="354" y="60" width="2" height="1" fill="#ff0000"/><rect x="347" y="61" width="1" height="1" fill="#ff0000"/><rect x="355" y="61" width="1" height="1" fill="#ff0000"/><rect x="386" y="49" width="8" height="1" fill="#808080"/><rect x="386" y="50" width="1" height="1" fill="#808080"/><rect x="387" y="50" width="6" height="1" fill="#fff"/><rect x="393" y="50" width="2" height="1" fill="#808080"/><rect x="386" y="51" width="1" height="1" fill="#808080"/><rect x="387" y="51" width="1" height="1" fill="#fff"/><rect x="393" y="51" width="1" height="1" fill="#808080"/><rect x="394" y="51" width="1" height="1" fill="#fff"/><rect x="395" y="51" width="1" height="1" fill="#808080"/><rect x="382" y="52" width="2" height="1" fill="#808080"/><rect x="386" y="52" width="1" height="1" fill="#808080"/><rect x="387" y="52" width="1" height="1" fill="#fff"/><rect x="393" y="52" width="4" height="1" fill="#808080"/><rect x="381" y="53" width="1" height="1" fill="#808080"/><rect x="383" y="53" width="1" height="1" fill="#fff"/><rect x="384" y="53" width="1" height="1" fill="#808080"/><rect x="386" y="53" width="1" height="1" fill="#808080"/><rect x="387" y="53" width="1" height="1" fill="#fff"/><rect x="394" y="53" width="2" height="1" fill="#fff"/><rect x="396" y="53" width="1" height="1" fill="#808080"/><rect x="397" y="53" width="1" height="1" fill="#fff"/><rect x="381" y="54" width="1" height="1" fill="#808080"/><rect x="382" y="54" width="1" height="1" fill="#fff"/><rect x="385" y="54" width="2" height="1" fill="#808080"/><rect x="387" y="54" width="1" height="1" fill="#fff"/><rect x="389" y="54" width="5" height="1" fill="#808080"/><rect x="396" y="54" width="1" height="1" fill="#808080"/><rect x="397" y="54" width="1" height="1" fill="#fff"/><rect x="382" y="55" width="1" height="1" fill="#fff"/><rect x="383" y="55" width="4" height="1" fill="#808080"/><rect x="387" y="55" width="1" height="1" fill="#fff"/><rect x="390" y="55" width="5" height="1" fill="#fff"/><rect x="396" y="55" width="1" height="1" fill="#808080"/><rect x="397" y="55" width="1" height="1" fill="#fff"/><rect x="383" y="56" width="4" height="1" fill="#808080"/><rect x="387" y="56" width="1" height="1" fill="#fff"/><rect x="396" y="56" width="1" height="1" fill="#808080"/><rect x="397" y="56" width="1" height="1" fill="#fff"/><rect x="384" y="57" width="3" height="1" fill="#808080"/><rect x="387" y="57" width="1" height="1" fill="#fff"/><rect x="389" y="57" width="5" height="1" fill="#808080"/><rect x="396" y="57" width="1" height="1" fill="#808080"/><rect x="397" y="57" width="1" height="1" fill="#fff"/><rect x="385" y="58" width="2" height="1" fill="#808080"/><rect x="387" y="58" width="1" height="1" fill="#fff"/><rect x="390" y="58" width="5" height="1" fill="#fff"/><rect x="396" y="58" width="1" height="1" fill="#808080"/><rect x="397" y="58" width="1" height="1" fill="#fff"/><rect x="386" y="59" width="1" height="1" fill="#808080"/><rect x="387" y="59" width="1" height="1" fill="#fff"/><rect x="396" y="59" width="1" height="1" fill="#808080"/><rect x="397" y="59" width="1" height="1" fill="#fff"/><rect x="386" y="60" width="1" height="1" fill="#808080"/><rect x="387" y="60" width="1" height="1" fill="#fff"/><rect x="389" y="60" width="5" height="1" fill="#808080"/><rect x="396" y="60" width="1" height="1" fill="#808080"/><rect x="397" y="60" width="1" height="1" fill="#fff"/><rect x="386" y="61" width="1" height="1" fill="#808080"/><rect x="387" y="61" width="1" height="1" fill="#fff"/><rect x="390" y="61" width="5" height="1" fill="#fff"/><rect x="396" y="61" width="1" height="1" fill="#808080"/><rect x="397" y="61" width="1" height="1" fill="#fff"/><rect x="386" y="62" width="1" height="1" fill="#808080"/><rect x="387" y="62" width="1" height="1" fill="#fff"/><rect x="396" y="62" width="1" height="1" fill="#808080"/><rect x="397" y="62" width="1" height="1" fill="#fff"/><rect x="386" y="63" width="11" height="1" fill="#808080"/><rect x="397" y="63" width="1" height="1" fill="#fff"/><rect x="387" y="64" width="11" height="1" fill="#fff"/><rect x="406" y="49" width="8" height="1" fill="#808080"/><rect x="406" y="50" width="1" height="1" fill="#808080"/><rect x="407" y="50" width="6" height="1" fill="#fff"/><rect x="413" y="50" width="2" height="1" fill="#808080"/><rect x="406" y="51" width="1" height="1" fill="#808080"/><rect x="407" y="51" width="1" height="1" fill="#fff"/><rect x="413" y="51" width="1" height="1" fill="#808080"/><rect x="414" y="51" width="1" height="1" fill="#fff"/><rect x="415" y="51" width="1" height="1" fill="#808080"/><rect x="406" y="52" width="3" height="1" fill="#808080"/><rect x="412" y="52" width="7" height="1" fill="#808080"/><rect x="406" y="53" width="1" height="1" fill="#808080"/><rect x="407" y="53" width="2" height="1" fill="#fff"/><rect x="409" y="53" width="1" height="1" fill="#808080"/><rect x="412" y="53" width="1" height="1" fill="#808080"/><rect x="413" y="53" width="5" height="1" fill="#fff"/><rect x="418" y="53" width="2" height="1" fill="#808080"/><rect x="406" y="54" width="1" height="1" fill="#808080"/><rect x="407" y="54" width="1" height="1" fill="#fff"/><rect x="410" y="54" width="1" height="1" fill="#808080"/><rect x="412" y="54" width="1" height="1" fill="#808080"/><rect x="413" y="54" width="1" height="1" fill="#fff"/><rect x="418" y="54" width="1" height="1" fill="#808080"/><rect x="419" y="54" width="1" height="1" fill="#fff"/><rect x="420" y="54" width="1" height="1" fill="#808080"/><rect x="406" y="55" width="1" height="1" fill="#808080"/><rect x="407" y="55" width="1" height="1" fill="#fff"/><rect x="408" y="55" width="3" height="1" fill="#808080"/><rect x="411" y="55" width="1" height="1" fill="#fff"/><rect x="412" y="55" width="1" height="1" fill="#808080"/><rect x="413" y="55" width="1" height="1" fill="#fff"/><rect x="418" y="55" width="4" height="1" fill="#808080"/><rect x="406" y="56" width="1" height="1" fill="#808080"/><rect x="407" y="56" width="1" height="1" fill="#fff"/><rect x="408" y="56" width="3" height="1" fill="#808080"/><rect x="411" y="56" width="1" height="1" fill="#fff"/><rect x="412" y="56" width="1" height="1" fill="#808080"/><rect x="413" y="56" width="1" height="1" fill="#fff"/><rect x="415" y="56" width="4" height="1" fill="#808080"/><rect x="419" y="56" width="2" height="1" fill="#fff"/><rect x="421" y="56" width="1" height="1" fill="#808080"/><rect x="422" y="56" width="1" height="1" fill="#fff"/><rect x="406" y="57" width="1" height="1" fill="#808080"/><rect x="407" y="57" width="1" height="1" fill="#fff"/><rect x="409" y="57" width="2" height="1" fill="#808080"/><rect x="411" y="57" width="1" height="1" fill="#fff"/><rect x="412" y="57" width="1" height="1" fill="#808080"/><rect x="413" y="57" width="1" height="1" fill="#fff"/><rect x="416" y="57" width="4" height="1" fill="#fff"/><rect x="421" y="57" width="1" height="1" fill="#808080"/><rect x="422" y="57" width="1" height="1" fill="#fff"/><rect x="406" y="58" width="1" height="1" fill="#808080"/><rect x="407" y="58" width="1" height="1" fill="#fff"/><rect x="410" y="58" width="1" height="1" fill="#808080"/><rect x="411" y="58" width="1" height="1" fill="#fff"/><rect x="412" y="58" width="1" height="1" fill="#808080"/><rect x="413" y="58" width="1" height="1" fill="#fff"/><rect x="415" y="58" width="4" height="1" fill="#808080"/><rect x="421" y="58" width="1" height="1" fill="#808080"/><rect x="422" y="58" width="1" height="1" fill="#fff"/><rect x="406" y="59" width="1" height="1" fill="#808080"/><rect x="407" y="59" width="1" height="1" fill="#fff"/><rect x="411" y="59" width="1" height="1" fill="#fff"/><rect x="412" y="59" width="1" height="1" fill="#808080"/><rect x="413" y="59" width="1" height="1" fill="#fff"/><rect x="416" y="59" width="4" height="1" fill="#fff"/><rect x="421" y="59" width="1" height="1" fill="#808080"/><rect x="422" y="59" width="1" height="1" fill="#fff"/><rect x="406" y="60" width="7" height="1" fill="#808080"/><rect x="413" y="60" width="1" height="1" fill="#fff"/><rect x="415" y="60" width="4" height="1" fill="#808080"/><rect x="421" y="60" width="1" height="1" fill="#808080"/><rect x="422" y="60" width="1" height="1" fill="#fff"/><rect x="407" y="61" width="5" height="1" fill="#fff"/><rect x="412" y="61" width="1" height="1" fill="#808080"/><rect x="413" y="61" width="1" height="1" fill="#fff"/><rect x="416" y="61" width="4" height="1" fill="#fff"/><rect x="421" y="61" width="1" height="1" fill="#808080"/><rect x="422" y="61" width="1" height="1" fill="#fff"/><rect x="412" y="62" width="1" height="1" fill="#808080"/><rect x="413" y="62" width="1" height="1" fill="#fff"/><rect x="421" y="62" width="1" height="1" fill="#808080"/><rect x="422" y="62" width="1" height="1" fill="#fff"/><rect x="412" y="63" width="10" height="1" fill="#808080"/><rect x="422" y="63" width="1" height="1" fill="#fff"/><rect x="413" y="64" width="10" height="1" fill="#fff"/><rect x="429" y="49" width="8" height="1" fill="#808080"/><rect x="442" y="49" width="1" height="1" fill="#808080"/><rect x="429" y="50" width="1" height="1" fill="#808080"/><rect x="430" y="50" width="6" height="1" fill="#fff"/><rect x="436" y="50" width="2" height="1" fill="#808080"/><rect x="441" y="50" width="3" height="1" fill="#808080"/><rect x="429" y="51" width="1" height="1" fill="#808080"/><rect x="430" y="51" width="1" height="1" fill="#fff"/><rect x="436" y="51" width="1" height="1" fill="#808080"/><rect x="437" y="51" width="1" height="1" fill="#fff"/><rect x="438" y="51" width="1" height="1" fill="#808080"/><rect x="440" y="51" width="5" height="1" fill="#808080"/><rect x="429" y="52" width="1" height="1" fill="#808080"/><rect x="430" y="52" width="1" height="1" fill="#fff"/><rect x="436" y="52" width="4" height="1" fill="#808080"/><rect x="441" y="52" width="1" height="1" fill="#fff"/><rect x="442" y="52" width="1" height="1" fill="#808080"/><rect x="443" y="52" width="3" height="1" fill="#fff"/><rect x="429" y="53" width="1" height="1" fill="#808080"/><rect x="430" y="53" width="1" height="1" fill="#fff"/><rect x="437" y="53" width="2" height="1" fill="#fff"/><rect x="439" y="53" width="1" height="1" fill="#808080"/><rect x="440" y="53" width="1" height="1" fill="#fff"/><rect x="442" y="53" width="1" height="1" fill="#808080"/><rect x="443" y="53" width="1" height="1" fill="#fff"/><rect x="429" y="54" width="1" height="1" fill="#808080"/><rect x="430" y="54" width="1" height="1" fill="#fff"/><rect x="432" y="54" width="5" height="1" fill="#808080"/><rect x="439" y="54" width="1" height="1" fill="#808080"/><rect x="440" y="54" width="1" height="1" fill="#fff"/><rect x="442" y="54" width="1" height="1" fill="#808080"/><rect x="443" y="54" width="1" height="1" fill="#fff"/><rect x="429" y="55" width="1" height="1" fill="#808080"/><rect x="430" y="55" width="1" height="1" fill="#fff"/><rect x="433" y="55" width="5" height="1" fill="#fff"/><rect x="439" y="55" width="1" height="1" fill="#808080"/><rect x="440" y="55" width="1" height="1" fill="#fff"/><rect x="442" y="55" width="1" height="1" fill="#808080"/><rect x="443" y="55" width="1" height="1" fill="#fff"/><rect x="429" y="56" width="1" height="1" fill="#808080"/><rect x="430" y="56" width="1" height="1" fill="#fff"/><rect x="439" y="56" width="1" height="1" fill="#808080"/><rect x="440" y="56" width="1" height="1" fill="#fff"/><rect x="442" y="56" width="1" height="1" fill="#808080"/><rect x="443" y="56" width="1" height="1" fill="#fff"/><rect x="429" y="57" width="1" height="1" fill="#808080"/><rect x="430" y="57" width="1" height="1" fill="#fff"/><rect x="432" y="57" width="5" height="1" fill="#808080"/><rect x="439" y="57" width="1" height="1" fill="#808080"/><rect x="440" y="57" width="1" height="1" fill="#fff"/><rect x="442" y="57" width="1" height="1" fill="#808080"/><rect x="443" y="57" width="1" height="1" fill="#fff"/><rect x="429" y="58" width="1" height="1" fill="#808080"/><rect x="430" y="58" width="1" height="1" fill="#fff"/><rect x="433" y="58" width="5" height="1" fill="#fff"/><rect x="439" y="58" width="1" height="1" fill="#808080"/><rect x="440" y="58" width="1" height="1" fill="#fff"/><rect x="442" y="58" width="1" height="1" fill="#808080"/><rect x="443" y="58" width="1" height="1" fill="#fff"/><rect x="429" y="59" width="1" height="1" fill="#808080"/><rect x="430" y="59" width="1" height="1" fill="#fff"/><rect x="439" y="59" width="1" height="1" fill="#808080"/><rect x="440" y="59" width="1" height="1" fill="#fff"/><rect x="442" y="59" width="1" height="1" fill="#808080"/><rect x="443" y="59" width="1" height="1" fill="#fff"/><rect x="429" y="60" width="1" height="1" fill="#808080"/><rect x="430" y="60" width="1" height="1" fill="#fff"/><rect x="432" y="60" width="5" height="1" fill="#808080"/><rect x="439" y="60" width="4" height="1" fill="#808080"/><rect x="443" y="60" width="1" height="1" fill="#fff"/><rect x="429" y="61" width="1" height="1" fill="#808080"/><rect x="430" y="61" width="1" height="1" fill="#fff"/><rect x="433" y="61" width="5" height="1" fill="#fff"/><rect x="439" y="61" width="1" height="1" fill="#808080"/><rect x="440" y="61" width="4" height="1" fill="#fff"/><rect x="429" y="62" width="1" height="1" fill="#808080"/><rect x="430" y="62" width="1" height="1" fill="#fff"/><rect x="439" y="62" width="1" height="1" fill="#808080"/><rect x="440" y="62" width="1" height="1" fill="#fff"/><rect x="429" y="63" width="11" height="1" fill="#808080"/><rect x="440" y="63" width="1" height="1" fill="#fff"/><rect x="430" y="64" width="11" height="1" fill="#fff"/><rect x="458" y="49" width="8" height="1" fill="#000"/><rect x="458" y="50" width="1" height="1" fill="#000"/><rect x="459" y="50" width="6" height="1" fill="#fff"/><rect x="465" y="50" width="2" height="1" fill="#000"/><rect x="458" y="51" width="1" height="1" fill="#000"/><rect x="459" y="51" width="6" height="1" fill="#fff"/><rect x="465" y="51" width="1" height="1" fill="#000"/><rect x="466" y="51" width="1" height="1" fill="#fff"/><rect x="467" y="51" width="1" height="1" fill="#000"/><rect x="458" y="52" width="1" height="1" fill="#000"/><rect x="459" y="52" width="6" height="1" fill="#fff"/><rect x="465" y="52" width="4" height="1" fill="#000"/><rect x="458" y="53" width="1" height="1" fill="#000"/><rect x="459" y="53" width="9" height="1" fill="#fff"/><rect x="468" y="53" width="1" height="1" fill="#000"/><rect x="458" y="54" width="1" height="1" fill="#000"/><rect x="459" y="54" width="2" height="1" fill="#fff"/><rect x="461" y="54" width="5" height="1" fill="#008080"/><rect x="466" y="54" width="2" height="1" fill="#fff"/><rect x="468" y="54" width="1" height="1" fill="#000"/><rect x="458" y="55" width="1" height="1" fill="#000"/><rect x="459" y="55" width="9" height="1" fill="#fff"/><rect x="468" y="55" width="1" height="1" fill="#000"/><rect x="458" y="56" width="1" height="1" fill="#000"/><rect x="459" y="56" width="9" height="1" fill="#fff"/><rect x="468" y="56" width="1" height="1" fill="#000"/><rect x="458" y="57" width="1" height="1" fill="#000"/><rect x="459" y="57" width="2" height="1" fill="#fff"/><rect x="461" y="57" width="5" height="1" fill="#008080"/><rect x="466" y="57" width="2" height="1" fill="#fff"/><rect x="468" y="57" width="1" height="1" fill="#000"/><rect x="458" y="58" width="1" height="1" fill="#000"/><rect x="459" y="58" width="9" height="1" fill="#fff"/><rect x="468" y="58" width="1" height="1" fill="#000"/><rect x="458" y="59" width="1" height="1" fill="#000"/><rect x="459" y="59" width="9" height="1" fill="#fff"/><rect x="468" y="59" width="1" height="1" fill="#000"/><rect x="458" y="60" width="1" height="1" fill="#000"/><rect x="459" y="60" width="2" height="1" fill="#fff"/><rect x="461" y="60" width="5" height="1" fill="#008080"/><rect x="466" y="60" width="2" height="1" fill="#fff"/><rect x="468" y="60" width="1" height="1" fill="#000"/><rect x="458" y="61" width="1" height="1" fill="#000"/><rect x="459" y="61" width="9" height="1" fill="#fff"/><rect x="468" y="61" width="1" height="1" fill="#000"/><rect x="458" y="62" width="1" height="1" fill="#000"/><rect x="459" y="62" width="9" height="1" fill="#fff"/><rect x="468" y="62" width="1" height="1" fill="#000"/><rect x="458" y="63" width="11" height="1" fill="#000"/><rect x="455" y="50" width="1" height="1" fill="#000080"/><rect x="455" y="51" width="1" height="1" fill="#000080"/><rect x="455" y="52" width="1" height="1" fill="#000080"/><rect x="455" y="53" width="1" height="1" fill="#000080"/><rect x="455" y="54" width="1" height="1" fill="#000080"/><rect x="455" y="55" width="1" height="1" fill="#000080"/><rect x="455" y="56" width="1" height="1" fill="#000080"/><rect x="455" y="57" width="1" height="1" fill="#000080"/><rect x="455" y="58" width="1" height="1" fill="#000080"/><rect x="455" y="59" width="1" height="1" fill="#000080"/><rect x="453" y="60" width="5" height="1" fill="#000080"/><rect x="454" y="61" width="3" height="1" fill="#000080"/><rect x="455" y="62" width="1" height="1" fill="#000080"/><rect x="482" y="49" width="8" height="1" fill="#808080"/><rect x="479" y="50" width="1" height="1" fill="#808080"/><rect x="482" y="50" width="1" height="1" fill="#808080"/><rect x="483" y="50" width="6" height="1" fill="#fff"/><rect x="489" y="50" width="2" height="1" fill="#808080"/><rect x="479" y="51" width="1" height="1" fill="#808080"/><rect x="480" y="51" width="1" height="1" fill="#fff"/><rect x="482" y="51" width="1" height="1" fill="#808080"/><rect x="483" y="51" width="1" height="1" fill="#fff"/><rect x="489" y="51" width="1" height="1" fill="#808080"/><rect x="490" y="51" width="1" height="1" fill="#fff"/><rect x="491" y="51" width="1" height="1" fill="#808080"/><rect x="477" y="52" width="1" height="1" fill="#808080"/><rect x="479" y="52" width="1" height="1" fill="#808080"/><rect x="480" y="52" width="1" height="1" fill="#fff"/><rect x="481" y="52" width="2" height="1" fill="#808080"/><rect x="483" y="52" width="1" height="1" fill="#fff"/><rect x="489" y="52" width="4" height="1" fill="#808080"/><rect x="477" y="53" width="6" height="1" fill="#808080"/><rect x="483" y="53" width="1" height="1" fill="#fff"/><rect x="490" y="53" width="2" height="1" fill="#fff"/><rect x="492" y="53" width="1" height="1" fill="#808080"/><rect x="493" y="53" width="1" height="1" fill="#fff"/><rect x="478" y="54" width="3" height="1" fill="#808080"/><rect x="481" y="54" width="1" height="1" fill="#fff"/><rect x="482" y="54" width="1" height="1" fill="#808080"/><rect x="483" y="54" width="1" height="1" fill="#fff"/><rect x="485" y="54" width="5" height="1" fill="#808080"/><rect x="492" y="54" width="1" height="1" fill="#808080"/><rect x="493" y="54" width="1" height="1" fill="#fff"/><rect x="479" y="55" width="1" height="1" fill="#808080"/><rect x="480" y="55" width="2" height="1" fill="#fff"/><rect x="482" y="55" width="1" height="1" fill="#808080"/><rect x="483" y="55" width="1" height="1" fill="#fff"/><rect x="486" y="55" width="5" height="1" fill="#fff"/><rect x="492" y="55" width="1" height="1" fill="#808080"/><rect x="493" y="55" width="1" height="1" fill="#fff"/><rect x="479" y="56" width="1" height="1" fill="#808080"/><rect x="480" y="56" width="1" height="1" fill="#fff"/><rect x="482" y="56" width="1" height="1" fill="#808080"/><rect x="483" y="56" width="1" height="1" fill="#fff"/><rect x="492" y="56" width="1" height="1" fill="#808080"/><rect x="493" y="56" width="1" height="1" fill="#fff"/><rect x="477" y="57" width="1" height="1" fill="#808080"/><rect x="479" y="57" width="1" height="1" fill="#808080"/><rect x="480" y="57" width="1" height="1" fill="#fff"/><rect x="481" y="57" width="2" height="1" fill="#808080"/><rect x="483" y="57" width="1" height="1" fill="#fff"/><rect x="485" y="57" width="5" height="1" fill="#808080"/><rect x="492" y="57" width="1" height="1" fill="#808080"/><rect x="493" y="57" width="1" height="1" fill="#fff"/><rect x="477" y="58" width="6" height="1" fill="#808080"/><rect x="483" y="58" width="1" height="1" fill="#fff"/><rect x="486" y="58" width="5" height="1" fill="#fff"/><rect x="492" y="58" width="1" height="1" fill="#808080"/><rect x="493" y="58" width="1" height="1" fill="#fff"/><rect x="478" y="59" width="3" height="1" fill="#808080"/><rect x="481" y="59" width="1" height="1" fill="#fff"/><rect x="482" y="59" width="1" height="1" fill="#808080"/><rect x="483" y="59" width="1" height="1" fill="#fff"/><rect x="492" y="59" width="1" height="1" fill="#808080"/><rect x="493" y="59" width="1" height="1" fill="#fff"/><rect x="479" y="60" width="1" height="1" fill="#808080"/><rect x="480" y="60" width="2" height="1" fill="#fff"/><rect x="482" y="60" width="1" height="1" fill="#808080"/><rect x="483" y="60" width="1" height="1" fill="#fff"/><rect x="485" y="60" width="5" height="1" fill="#808080"/><rect x="492" y="60" width="1" height="1" fill="#808080"/><rect x="493" y="60" width="1" height="1" fill="#fff"/><rect x="479" y="61" width="1" height="1" fill="#808080"/><rect x="480" y="61" width="1" height="1" fill="#fff"/><rect x="482" y="61" width="1" height="1" fill="#808080"/><rect x="483" y="61" width="1" height="1" fill="#fff"/><rect x="486" y="61" width="5" height="1" fill="#fff"/><rect x="492" y="61" width="1" height="1" fill="#808080"/><rect x="493" y="61" width="1" height="1" fill="#fff"/><rect x="479" y="62" width="1" height="1" fill="#808080"/><rect x="480" y="62" width="1" height="1" fill="#fff"/><rect x="482" y="62" width="1" height="1" fill="#808080"/><rect x="483" y="62" width="1" height="1" fill="#fff"/><rect x="492" y="62" width="1" height="1" fill="#808080"/><rect x="493" y="62" width="1" height="1" fill="#fff"/><rect x="480" y="63" width="1" height="1" fill="#fff"/><rect x="482" y="63" width="11" height="1" fill="#808080"/><rect x="493" y="63" width="1" height="1" fill="#fff"/><rect x="483" y="64" width="11" height="1" fill="#fff"/><rect x="85" y="46" width="1" height="22" fill="#808080"/><rect x="86" y="46" width="1" height="22" fill="#fff"/><rect x="215" y="46" width="1" height="22" fill="#808080"/><rect x="216" y="46" width="1" height="22" fill="#fff"/><rect x="249" y="46" width="1" height="22" fill="#808080"/><rect x="250" y="46" width="1" height="22" fill="#fff"/><rect x="310" y="46" width="1" height="22" fill="#808080"/><rect x="311" y="46" width="1" height="22" fill="#fff"/><rect x="371" y="46" width="1" height="22" fill="#808080"/><rect x="372" y="46" width="1" height="22" fill="#fff"/><rect x="501" y="46" width="1" height="22" fill="#808080"/><rect x="502" y="46" width="1" height="22" fill="#fff"/></svg>
<div class="abs" style="left:511px;top:51px;font-size:9.5px;line-height:12px;color:#000;white-space:pre;letter-spacing:0.25px">Stack:</div>
<div class="abs" style="left:543px;top:46px;width:72px;height:22px;box-sizing:border-box;border:1px solid;border-color:#808080 #fff #fff #808080;">
 <div class="abs" style="left:0;top:0;width:70px;height:20px;box-sizing:border-box;border:1px solid;border-color:#000 #b9b9b9 #b9b9b9 #000;"></div>
 <div class="abs" style="left:5px;top:5px;font-size:9.5px;line-height:12px;color:#fff;white-space:pre;letter-spacing:0.2px">Base</div>
 <div class="abs" style="left:4px;top:4px;font-size:9.5px;line-height:12px;color:#808080;white-space:pre;letter-spacing:0.2px">Base</div>
 <div class="abs" style="left:51px;top:1px;width:18px;height:18px;box-sizing:border-box;border:1px solid;border-color:#fff #000 #000 #fff;background:#b9b9b9">
  <div class="abs" style="left:0;top:0;right:0;bottom:0;border:1px solid;border-color:#fff #808080 #808080 #fff;"></div>
  <svg class="abs" style="left:3px;top:5px" width="11" height="7" shape-rendering="crispEdges"><path d="M1 1h9v1h-1v1h-1v1h-1v1h-1v1h-1v-1h-1v-1h-1v-1h-1v-1h-1z" fill="#fff"/><path d="M0 0h9v1h-1v1h-1v1h-1v1h-1v1h-1v-1h-1v-1h-1v-1h-1v-1h-1z" fill="#808080"/></svg>
 </div>
</div>
<!-- toolbar close btn -->
<div class="abs" style="left:768px;top:49px;width:16px;height:15px;box-sizing:border-box;border:1px solid;border-color:#fff #000 #000 #fff;background:#b9b9b9">
 <div class="abs" style="left:0;top:0;right:0;bottom:0;border:1px solid;border-color:#b9b9b9 #808080 #808080 #b9b9b9;"></div>
 <svg class="abs" style="left:0;top:0" width="14" height="13" shape-rendering="crispEdges"><rect x="3" y="3" width="2" height="1" fill="#000"/><rect x="9" y="3" width="2" height="1" fill="#000"/><rect x="4" y="4" width="2" height="1" fill="#000"/><rect x="8" y="4" width="2" height="1" fill="#000"/><rect x="5" y="5" width="4" height="1" fill="#000"/><rect x="6" y="6" width="2" height="1" fill="#000"/><rect x="5" y="7" width="4" height="1" fill="#000"/><rect x="4" y="8" width="2" height="1" fill="#000"/><rect x="8" y="8" width="2" height="1" fill="#000"/><rect x="3" y="9" width="2" height="1" fill="#000"/><rect x="9" y="9" width="2" height="1" fill="#000"/></svg>
</div>
<!-- editor -->
<div class="abs" style="left:4px;top:71px;width:780px;height:1px;background:#808080"></div>
<div class="abs" style="left:4px;top:72px;width:780px;height:922px;background:#fff"></div>
<div class="abs" style="left:5px;top:73px;width:30px;height:920px;background:#c0c0c0"></div>
<div class="abs" style="left:35px;top:72px;width:1px;height:921px;background:#404040"></div>
<div class="abs" style="left:37px;top:73px;width:14px;height:920px;background:#c0c0c0"></div>
<div class="abs" style="left:51px;top:72px;width:1px;height:921px;background:#404040"></div>
<div class="abs" style="left:4px;top:993px;width:780px;height:1px;background:#000"></div>
<div class="abs" style="left:4px;top:994px;width:780px;height:1px;background:#fff"></div>
<div class="no" style="top:73px">1</div><div class="no" style="top:90px">2</div><div class="no" style="top:107px">3</div><div class="no" style="top:124px">4</div><div class="no" style="top:141px">5</div><div class="no" style="top:158px">6</div><div class="no" style="top:175px">7</div><div class="no" style="top:192px">8</div><div class="no" style="top:209px">9</div><div class="no" style="top:226px">10</div><div class="no" style="top:243px">11</div><div class="no" style="top:260px">12</div><div class="no" style="top:277px">13</div><div class="no" style="top:294px">14</div><div class="no" style="top:311px">15</div><div class="no" style="top:328px">16</div><div class="no" style="top:345px">17</div><div class="no" style="top:362px">18</div><div class="no" style="top:379px">19</div><div class="no" style="top:396px">20</div><div class="no" style="top:413px">21</div><div class="no" style="top:430px">22</div><div class="no" style="top:447px">23</div><div class="no" style="top:464px">24</div><div class="no" style="top:481px">25</div><div class="no" style="top:498px">26</div><div class="no" style="top:515px">27</div><div class="no" style="top:532px">28</div><div class="no" style="top:549px">29</div><div class="no" style="top:566px">30</div><div class="no" style="top:583px">31</div><div class="no" style="top:600px">32</div><div class="no" style="top:617px">33</div><div class="no" style="top:634px">34</div><div class="no" style="top:651px">35</div><div class="no" style="top:668px">36</div><div class="no" style="top:685px">37</div><div class="no" style="top:702px">38</div><div class="no" style="top:719px">39</div><div class="no" style="top:736px">40</div><div class="no" style="top:753px">41</div><div class="no" style="top:770px">42</div><div class="no" style="top:787px">43</div><div class="no" style="top:804px">44</div><div class="no" style="top:821px">45</div><div class="no" style="top:838px">46</div><div class="no" style="top:855px">47</div><div class="no" style="top:872px">48</div><div class="no" style="top:889px">49</div><div class="no" style="top:906px">50</div><div class="no" style="top:923px">51</div><div class="no" style="top:940px">52</div><div class="no" style="top:957px">53</div>
<div class="da" style="top:79px"></div><div class="da" style="top:96px"></div><div class="da" style="top:113px"></div><div class="da" style="top:130px"></div><div class="da" style="top:147px"></div><div class="da" style="top:181px"></div><div class="da" style="top:198px"></div><div class="da" style="top:215px"></div><div class="da" style="top:232px"></div><div class="da" style="top:249px"></div><div class="da" style="top:266px"></div><div class="da" style="top:283px"></div><div class="da" style="top:300px"></div><div class="da" style="top:317px"></div><div class="da" style="top:334px"></div><div class="da" style="top:351px"></div><div class="da" style="top:368px"></div><div class="da" style="top:419px"></div><div class="da" style="top:470px"></div><div class="da" style="top:487px"></div><div class="da" style="top:504px"></div><div class="da" style="top:521px"></div><div class="da" style="top:538px"></div><div class="da" style="top:572px"></div><div class="da" style="top:606px"></div><div class="da" style="top:623px"></div><div class="da" style="top:640px"></div><div class="da" style="top:657px"></div><div class="da" style="top:674px"></div><div class="da" style="top:691px"></div><div class="da" style="top:708px"></div><div class="da" style="top:725px"></div><div class="da" style="top:742px"></div><div class="da" style="top:759px"></div><div class="da" style="top:793px"></div><div class="da" style="top:810px"></div><div class="da" style="top:827px"></div><div class="da" style="top:844px"></div><div class="da" style="top:861px"></div><div class="da" style="top:878px"></div><div class="da" style="top:895px"></div><div class="da" style="top:912px"></div><div class="da" style="top:929px"></div><div class="da" style="top:946px"></div><div class="da" style="top:963px"></div>
<div class="ln" style="top:74px"><span class="p">clear all      </span><span class="c">% Finite-Elemente-Modell eines Kragtraegers ...</span></div><div class="ln" style="top:91px"><span class="p">L  = 1000 ;    </span><span class="c">% ... der Laenge L ...</span></div><div class="ln" style="top:108px"><span class="p">EI = 2e10 ;    </span><span class="c">% ... mit konstanter Biegesteifigkeit EI ...</span></div><div class="ln" style="top:125px"><span class="p">q  = 2 ;       </span><span class="c">% ... unter konstamter Linienlast q, ...</span></div><div class="ln" style="top:142px"><span class="p">n  = 10 ;      </span><span class="c">% ... eingeteilt in n Elemente</span></div><div class="ln" style="top:159px"></div><div class="ln" style="top:176px"><span class="p">xy = zeros (n+1,1) ;       </span><span class="c">% Koordinaten der n+1 Knoten</span></div><div class="ln" style="top:193px"><span class="k">for</span><span class="p"> i=1:n+1</span></div><div class="ln" style="top:210px"><span class="p">    xy(i,1) = (i-1)*L/n ;</span></div><div class="ln" style="top:227px"><span class="k">end</span></div><div class="ln" style="top:244px"><span class="p">km = zeros (n,2) ; ep = zeros (n,3) ;</span></div><div class="ln" style="top:261px"><span class="k">for</span><span class="p"> i=1:n</span></div><div class="ln" style="top:278px"><span class="p">    km(i,:) = [i  i+1] ;   </span><span class="c">% Koinzidenzmatrix</span></div><div class="ln" style="top:295px"><span class="p">    ep(i,:) = [EI q q] ;   </span><span class="c">% Elementparameter</span></div><div class="ln" style="top:312px"><span class="k">end</span></div><div class="ln" style="top:329px"><span class="p">kr = zeros (n+1,2) ;</span></div><div class="ln" style="top:346px"><span class="p">kr(1,:) = [1 1] ;          </span><span class="c">% Knoten 1: Starre Einspannung</span></div><div class="ln" style="top:363px"><span class="p">bk = zeros (n+1,2) ;       </span><span class="c">% Keine zusaetzlichen Knotenlasten</span></div><div class="ln" style="top:380px"></div><div class="ln" style="top:397px"><span class="c">% Aufbau des linearen Gleichungssystems  Ksys * v = fq:</span></div><div class="ln" style="top:414px"><span class="p">[succ Ksys fq]   = syswbc_m (xy , km , ep , kr , bk) ;</span></div><div class="ln" style="top:431px"><span class="c">% Ksys ist eine symmetrische Bandmatrix, und ...</span></div><div class="ln" style="top:448px"></div><div class="ln" style="top:465px"><span class="p">Ks = SymBand2Sparse (Ksys) ;        </span><span class="c">% Ks ist eine "Sparse matrix"</span></div><div class="ln" style="top:482px"><span class="p">spy(Ks)                             </span><span class="c">% Muster zeichnen</span></div><div class="ln" style="top:499px"><span class="p">m = 2*n+2 ;</span></div><div class="ln" style="top:516px"><span class="p">disp ([</span><span class="s">'GleichungsAnzahl m = '</span><span class="p"> num2str(m)]) ;</span></div><div class="ln" style="top:533px"><span class="p">Kondzahl = condest (Ks)             </span><span class="c">% Konditionszahl</span></div><div class="ln" style="top:550px"></div><div class="ln" style="top:567px"><span class="p">v  = Ks \ fq ;                      </span><span class="c">% Matlab-Standard-Solver</span></div><div class="ln" style="top:584px"></div><div class="ln" style="top:601px"><span class="p">vKG = KonjugGrad     (Ks , fq , 1e-6 , m*2) ;   </span><span class="c">% Meister/Vömel</span></div><div class="ln" style="top:618px"><span class="p">vbicg = bicg         (Ks , fq , 1e-6 , m*2) ;   </span><span class="c">% Biconjugate gradient</span></div><div class="ln" style="top:635px"><span class="p">vbicgstab = bicgstab (Ks , fq , 1e-6 , m*2) ;   </span><span class="c">% Biconjugate gradient stabilized</span></div><div class="ln" style="top:652px"><span class="p">vcgs = cgs           (Ks , fq , 1e-6 , m*2) ;   </span><span class="c">% Conjugate gradient squared</span></div><div class="ln" style="top:669px"><span class="p">vgmres = gmres       (Ks , fq,5,1e-6 , m*2) ;   </span><span class="c">% Generalized minimum residual</span></div><div class="ln" style="top:686px"><span class="p">vlsqr = lsqr         (Ks , fq , 1e-6 , m*2) ;   </span><span class="c">% LSQR (Conjugate Gradients on the Normal Equations)</span></div><div class="ln" style="top:703px"><span class="p">vminres = minres     (Ks , fq , 1e-6 , m*2) ;   </span><span class="c">% Minimum residual</span></div><div class="ln" style="top:720px"><span class="p">vpcg = pcg           (Ks , fq , 1e-6 , m*2) ;   </span><span class="c">% Preconditioned conjugate gradient</span></div><div class="ln" style="top:737px"><span class="p">vqmr = qmr           (Ks , fq , 1e-6 , m*2) ;   </span><span class="c">% Quasiminimal residual</span></div><div class="ln" style="top:754px"><span class="p">vsymmlq = symmlq     (Ks , fq , 1e-6 , m*2) ;   </span><span class="c">% Symmetric LQ</span></div><div class="ln" style="top:771px"></div><div class="ln" style="top:788px"><span class="p">disp ([</span><span class="s">'v            = '</span><span class="p"> num2str(v(2*n+1))]) ;</span></div><div class="ln" style="top:805px"><span class="p">disp ([</span><span class="s">'vEndKG       = '</span><span class="p"> num2str(vKG(2*n+1))]) ;</span></div><div class="ln" style="top:822px"><span class="p">disp ([</span><span class="s">'vEndbicg     = '</span><span class="p"> num2str(vbicg(2*n+1))]) ;</span></div><div class="ln" style="top:839px"><span class="p">disp ([</span><span class="s">'vEndbicgstab = '</span><span class="p"> num2str(vbicgstab(2*n+1))]) ;</span></div><div class="ln" style="top:856px"><span class="p">disp ([</span><span class="s">'vEndcgs      = '</span><span class="p"> num2str(vcgs(2*n+1))]) ;</span></div><div class="ln" style="top:873px"><span class="p">disp ([</span><span class="s">'vEndgmres    = '</span><span class="p"> num2str(vgmres(2*n+1))]) ;</span></div><div class="ln" style="top:890px"><span class="p">disp ([</span><span class="s">'vEndlsqr     = '</span><span class="p"> num2str(vlsqr(2*n+1))]) ;</span></div><div class="ln" style="top:907px"><span class="p">disp ([</span><span class="s">'vEndminres   = '</span><span class="p"> num2str(vminres(2*n+1))]) ;</span></div><div class="ln" style="top:924px"><span class="p">disp ([</span><span class="s">'vEndpcg      = '</span><span class="p"> num2str(vpcg(2*n+1))]) ;</span></div><div class="ln" style="top:941px"><span class="p">disp ([</span><span class="s">'vEndqmr      = '</span><span class="p"> num2str(vqmr(2*n+1))]) ;</span></div><div class="ln" style="top:958px"><span class="p">disp ([</span><span class="s">'vEndsymmlq   = '</span><span class="p"> num2str(vsymmlq(2*n+1))]) ;</span></div>
<!-- vertical scrollbar -->
<div class="abs" style="left:768px;top:72px;width:16px;height:906px;background:#dbdcdb"></div>
<div class="abs" style="left:768px;top:72px;width:16px;height:16px;box-sizing:border-box;background:#b9b9b9;border:1px solid;border-color:#dfdfdf #000 #000 #dfdfdf"><div class="abs" style="left:0;top:0;right:0;bottom:0;border:1px solid;border-color:#fff #808080 #808080 #fff"></div></div>
<svg class="abs" style="left:772px;top:78px" width="7" height="4" shape-rendering="crispEdges"><path d="M3 0h1v1h1v1h1v1h1v1h-7v-1h1v-1h1v-1h1z" fill="#000"/></svg>
<div class="abs" style="left:768px;top:88px;width:16px;height:373px;box-sizing:border-box;background:#b9b9b9;border:1px solid;border-color:#dfdfdf #000 #000 #dfdfdf"><div class="abs" style="left:0;top:0;right:0;bottom:0;border:1px solid;border-color:#fff #808080 #808080 #fff"></div></div>
<div class="abs" style="left:768px;top:961px;width:16px;height:1px;background:#000"></div>
<div class="abs" style="left:768px;top:962px;width:16px;height:16px;box-sizing:border-box;background:#b9b9b9;border:1px solid;border-color:#dfdfdf #000 #000 #dfdfdf"><div class="abs" style="left:0;top:0;right:0;bottom:0;border:1px solid;border-color:#fff #808080 #808080 #fff"></div></div>
<svg class="abs" style="left:772px;top:968px" width="7" height="4" shape-rendering="crispEdges"><path d="M0 0h7v1h-1v1h-1v1h-1v1h-1v-1h-1v-1h-1v-1h-1z" fill="#000"/></svg>
<!-- horizontal scrollbar -->
<div class="abs" style="left:52px;top:978px;width:732px;height:16px;background:#b9b9b9"></div>
<div class="abs" style="left:4px;top:993px;width:48px;height:1px;background:#404040"></div>
<div class="abs" style="left:52px;top:978px;width:16px;height:16px;box-sizing:border-box;background:#b9b9b9;border:1px solid;border-color:#dfdfdf #000 #000 #dfdfdf"><div class="abs" style="left:0;top:0;right:0;bottom:0;border:1px solid;border-color:#fff #808080 #808080 #fff"></div></div>
<svg class="abs" style="left:58px;top:982px" width="6" height="8" shape-rendering="crispEdges"><path d="M4 1h1v7h-1z" fill="#fff"/><path d="M3 0h1v7h-1z M2 1h1v5h-1z M1 2h1v3h-1z M0 3h1v1h-1z" fill="#808080"/></svg>
<div class="abs" style="left:68px;top:978px;width:684px;height:16px;box-sizing:border-box;background:#b9b9b9;border:1px solid;border-color:#dfdfdf #000 #000 #dfdfdf"><div class="abs" style="left:0;top:0;right:0;bottom:0;border:1px solid;border-color:#fff #808080 #808080 #fff"></div></div>
<div class="abs" style="left:752px;top:978px;width:16px;height:16px;box-sizing:border-box;background:#b9b9b9;border:1px solid;border-color:#dfdfdf #000 #000 #dfdfdf"><div class="abs" style="left:0;top:0;right:0;bottom:0;border:1px solid;border-color:#fff #808080 #808080 #fff"></div></div>
<svg class="abs" style="left:758px;top:982px" width="6" height="8" shape-rendering="crispEdges"><path d="M1 7h1v1h-1z M2 6h1v1h-1z M3 5h1v1h-1z M4 4h1v1h-1z" fill="#fff"/><path d="M0 0h1v7h-1z M1 1h1v5h-1z M2 2h1v3h-1z M3 3h1v1h-1z" fill="#808080"/></svg>
<div class="abs" style="left:4px;top:994px;width:780px;height:1px;background:#fff"></div>
<!-- status bar -->
<div class="st" style="left:532px;width:138px;padding-left:3px">script</div>
<div class="st" style="left:672px;width:112px;padding-left:4px">Ln 23       Col 1</div>
</div></body></html>
